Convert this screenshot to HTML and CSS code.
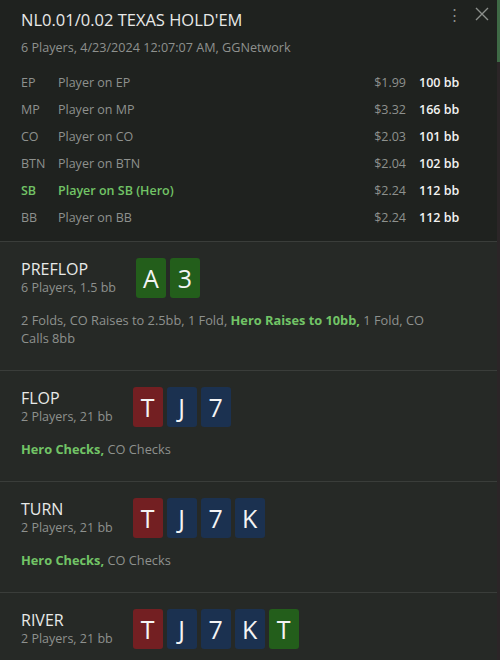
FILE: index.html
```html
<!DOCTYPE html>
<html>
<head>
<link rel="stylesheet" href="styles.css">
</head>
<body>
<div class="panel">
  <div class="scroll">
    <header class="hand">
      <div class="tools">
        <span class="dots">⋮</span>
        <svg class="close" width="14" height="14" viewBox="0 0 14 14">
          <path d="M1 1 L13 13 M13 1 L1 13" stroke="#8c8f8c" stroke-width="1.4" fill="none"/>
        </svg>
      </div>
      <h1 class="title">NL0.01/0.02 TEXAS HOLD'EM</h1>
      <div class="meta">6 Players, 4/23/2024 12:07:07 AM, GGNetwork</div>
      <table class="players">
        <tr><td class="pos">EP</td><td class="name">Player on EP</td><td class="cash">$1.99</td><td class="bb">100 bb</td></tr>
        <tr><td class="pos">MP</td><td class="name">Player on MP</td><td class="cash">$3.32</td><td class="bb">166 bb</td></tr>
        <tr><td class="pos">CO</td><td class="name">Player on CO</td><td class="cash">$2.03</td><td class="bb">101 bb</td></tr>
        <tr><td class="pos">BTN</td><td class="name">Player on BTN</td><td class="cash">$2.04</td><td class="bb">102 bb</td></tr>
        <tr class="hero"><td class="pos">SB</td><td class="name">Player on SB (Hero)</td><td class="cash">$2.24</td><td class="bb">112 bb</td></tr>
        <tr><td class="pos">BB</td><td class="name">Player on BB</td><td class="cash">$2.24</td><td class="bb">112 bb</td></tr>
      </table>
    </header>

    <section class="street">
      <div class="street-head">
        <div class="street-info">
          <div class="street-name">PREFLOP</div>
          <div class="street-sub">6 Players, 1.5 bb</div>
        </div>
        <div class="cards">
          <span class="card green">A</span>
          <span class="card green">3</span>
        </div>
      </div>
      <p class="actions">2 Folds, CO Raises to 2.5bb, 1 Fold, <b class="me">Hero Raises to 10bb,</b> 1 Fold, CO Calls 8bb</p>
    </section>

    <section class="street">
      <div class="street-head">
        <div class="street-info">
          <div class="street-name">FLOP</div>
          <div class="street-sub">2 Players, 21 bb</div>
        </div>
        <div class="cards">
          <span class="card red">T</span>
          <span class="card blue">J</span>
          <span class="card blue">7</span>
        </div>
      </div>
      <p class="actions"><b class="me">Hero Checks,</b> CO Checks</p>
    </section>

    <section class="street">
      <div class="street-head">
        <div class="street-info">
          <div class="street-name">TURN</div>
          <div class="street-sub">2 Players, 21 bb</div>
        </div>
        <div class="cards">
          <span class="card red">T</span>
          <span class="card blue">J</span>
          <span class="card blue">7</span>
          <span class="card blue">K</span>
        </div>
      </div>
      <p class="actions"><b class="me">Hero Checks,</b> CO Checks</p>
    </section>

    <section class="street">
      <div class="street-head">
        <div class="street-info">
          <div class="street-name">RIVER</div>
          <div class="street-sub">2 Players, 21 bb</div>
        </div>
        <div class="cards">
          <span class="card red">T</span>
          <span class="card blue">J</span>
          <span class="card blue">7</span>
          <span class="card blue">K</span>
          <span class="card green">T</span>
        </div>
      </div>
      <p class="actions"><b class="me">Hero Checks,</b> CO Checks</p>
    </section>
  </div>
  <div class="scrollbar"><div class="thumb"></div></div>
</div>
</body>
</html>
```

FILE: styles.css
```css
html, body {
    margin: 0;
    padding: 0;
    height: 100%;
    overflow: hidden;
    background: #262926;
}

body {
    font-family: "Open Sans", "Noto Sans", sans-serif;
    color: #8e918e;
}

.panel {
    display: flex;
    height: 660px;
}

.scroll {
    flex: 1;
    overflow: hidden;
}

.scrollbar {
    width: 3px;
    background: #2b2527;
}

.thumb {
    height: 62px;
    background: #3f6a46;
}

.hand {
    position: relative;
    background: #1f221f;
    padding: 10px 21px 10px;
    border-bottom: 1px solid #3a3d3a;
}

.tools {
    position: absolute;
    top: 6px;
    right: 8px;
    display: flex;
    align-items: center;
    gap: 13px;
}

.dots {
    color: #8c8f8c;
    font-size: 15px;
    line-height: 16px;
}

.title {
    margin: 0;
    font-size: 16.5px;
    font-weight: 400;
    color: #e8e9e8;
    line-height: 20px;
}

.meta {
    font-size: 12.6px;
    line-height: 16px;
    margin-top: 10px;
}

.players {
    width: 100%;
    border-collapse: collapse;
    margin-top: 13px;
    font-size: 12.5px;
}

.players td {
    padding: 0;
    height: 27px;
}

.players .pos {
    width: 37px;
}

.players .cash {
    text-align: right;
    width: 90px;
}

.players .bb {
    width: 57px;
    padding-left: 13px;
    color: #f2f2f2;
    font-weight: 600;
}

.players .hero .pos,
.players .hero .name {
    color: #72c466;
    font-weight: 600;
}

.street {
    padding: 16px 21px 0;
    border-bottom: 1px solid #3a3d3a;
}

.street-head {
    display: flex;
    align-items: center;
    gap: 20px;
}

.street-name {
    font-size: 16px;
    color: #e8e9e8;
    line-height: 20px;
}

.street-sub {
    font-size: 12.5px;
    line-height: 18px;
}

.cards {
    display: flex;
    gap: 4px;
}

.card {
    width: 30px;
    height: 40px;
    border-radius: 3px;
    color: #f4f4f4;
    font-size: 25px;
    line-height: 40px;
    text-align: center;
}

.card.green { background: #235e1b; }
.card.red { background: #731f22; }
.card.blue { background: #1b3150; }

.actions {
    margin: 13px 0 23px;
    font-size: 12.8px;
    line-height: 18px;
    max-width: 412px;
}

.me {
    color: #72c466;
    font-weight: 700;
}
```
